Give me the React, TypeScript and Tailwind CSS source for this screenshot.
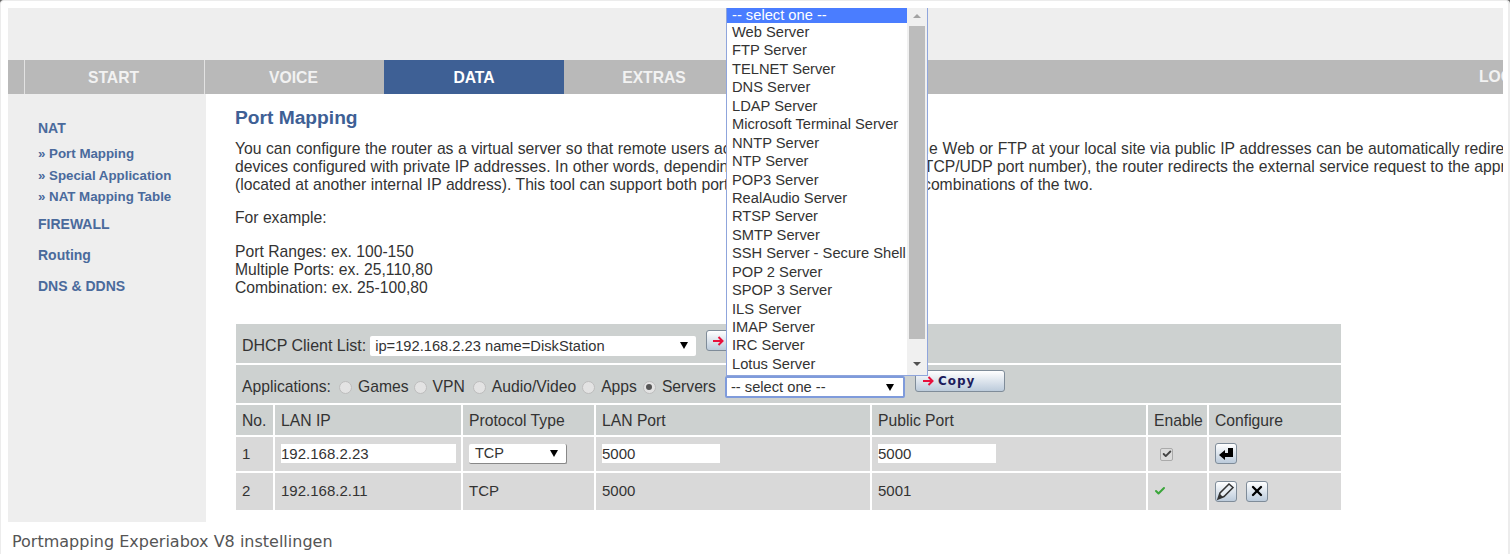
import { Check, X } from 'lucide-react';

const SERVERS = [
  'Web Server', 'FTP Server', 'TELNET Server', 'DNS Server', 'LDAP Server', 'Microsoft Terminal Server',
  'NNTP Server', 'NTP Server', 'POP3 Server', 'RealAudio Server', 'RTSP Server', 'SMTP Server',
  'SSH Server - Secure Shell', 'POP 2 Server', 'SPOP 3 Server', 'ILS Server', 'IMAP Server', 'IRC Server', 'Lotus Server',
];

const COLS = 'grid grid-cols-[37px_186px_131px_274px_274px_59px_132px] gap-x-[2px]';
const CELL = 'flex items-center bg-[#d9d9d9] pb-[1px] pl-[6px] text-[15px]';

function Arrow() {
  return (
    <svg width="11" height="10" viewBox="0 0 11 10" className="shrink-0">
      <path d="M0 5h9M5.500 1 9.500 5 5.500 9" fill="none" stroke="#e8103c" strokeWidth="2" />
    </svg>
  );
}

function Caret() {
  return <span className="h-0 w-0 border-x-[4px] border-t-[7px] border-x-transparent border-t-black" />;
}

function Radio({ on = false }: { on?: boolean }) {
  return (
    <span className="mr-[6px] flex h-[13px] w-[13px] shrink-0 items-center justify-center rounded-full border border-[#bdbdbd] bg-[#e3e3e3]">
      {on && <span className="h-[6px] w-[6px] rounded-full bg-[#555]" />}
    </span>
  );
}

function IconButton({ children }: { children: React.ReactNode }) {
  return (
    <span className="flex h-[21px] w-[22px] items-center justify-center rounded-[3px] border border-[#7f8c99] bg-gradient-to-b from-white to-[#bccbdb]">
      {children}
    </span>
  );
}

export default function App() {
  return (
    <div className="h-[554px] w-[1510px] overflow-hidden bg-[#666] font-['Liberation_Sans',Arial,sans-serif] text-[#333]">
      <div className="h-full overflow-hidden rounded-t-[4px] border-l border-r-2 border-t border-[#ececec] bg-white">
        <div className="relative ml-[7px] mt-[7px] h-[514px] w-[1495px] overflow-hidden">
          <div className="h-[52px] bg-[#eeeeee]" />
          <nav className="flex h-[34px] bg-[#b9b9b9] text-[15.700px] font-bold text-[#f2f2f2]">
            <div className="w-[16px]" />
            <div className="flex w-[180px] items-center justify-center border-l border-[#e2e2e2] pr-[2px] pt-[1px]">START</div>
            <div className="flex w-[180px] items-center justify-center border-l border-[#e2e2e2] pr-[2px] pt-[1px]">VOICE</div>
            <div className="flex w-[180px] items-center justify-center bg-[#3e6095] pt-[1px] text-white">DATA</div>
            <div className="flex w-[180px] items-center justify-center pt-[1px]">EXTRAS</div>
            <div className="ml-auto mr-[-43px] pt-[8px] leading-[18px]">LOGOUT</div>
          </nav>
          <div className="flex">
            <aside className="h-[428px] w-[198px] shrink-0 bg-[#eeeeee] pl-[30px] pt-[25px] text-[14px] font-bold leading-[18px] text-[#4a6a9c]">
              <div>NAT</div>
              <ul className="mt-[6px] text-[13.300px] leading-[21.600px]">
                <li>» Port Mapping</li>
                <li>» Special Application</li>
                <li>» NAT Mapping Table</li>
              </ul>
              <div className="mt-[7px]">FIREWALL</div>
              <div className="mt-[13px]">Routing</div>
              <div className="mt-[13px]">DNS &amp; DDNS</div>
            </aside>
            <main className="w-[1400px] shrink-0 pl-[29px] pt-[12px] text-[15.700px] leading-[18px]">
              <h1 className="mb-[10px] text-[19.200px] font-bold leading-[24px] text-[#3e6095]">Port Mapping</h1>
              <p className="whitespace-nowrap [word-spacing:0.2px]">
                You can configure the router as a virtual server so that remote users ac<span className="tracking-[0.25px]">cessing services such as the</span> Web or FTP at your local site via public IP addresses can be automatically redirected to local servers
                <br />
                devices configured with private IP addresses. In other words, depending on the requested service (TCP/UDP port number), the router redirects the external service request to the appropriate server
                <br />
                (located at another internal IP address). This tool can support both port ranges, multiple ports, and combinations of the two.
              </p>
              <p className="mt-[15px]">For example:</p>
              <p className="mt-[16px]">
                Port Ranges: ex. 100-150
                <br />
                Multiple Ports: ex. 25,110,80
                <br />
                Combination: ex. 25-100,80
              </p>
              <section className="ml-[1px] mt-[27px] flex w-[1105px] flex-col gap-y-[2px]">
                <div className="flex h-[39px] items-center bg-[#cdd1d0] pl-[6px] pt-[4px] text-[16px]">
                  DHCP Client List:
                  <span className="ml-[4px] flex h-[20px] w-[326px] items-center justify-between rounded-[2px] bg-white pl-[5px] pr-[8px] text-[14.700px]">
                    ip=192.168.2.23 name=DiskStation
                    <Caret />
                  </span>
                  <span className="ml-[10px] mt-[2px] flex h-[21px] w-[90px] items-center self-start rounded-[3px] border border-[#7f8c99] bg-gradient-to-b from-white to-[#bccbdb] pl-[6px]">
                    <Arrow />
                  </span>
                </div>
                <div className="flex h-[38px] items-center bg-[#cdd1d0] pl-[6px] pt-[6px]">
                  <span className="mr-[8px]">Applications:</span>
                  <Radio /><span className="mr-[5px]">Games</span>
                  <Radio /><span className="mr-[8px]">VPN</span>
                  <Radio /><span className="mr-[6px]">Audio/Video</span>
                  <Radio /><span className="mr-[6px]">Apps</span>
                  <Radio on /><span>Servers</span>
                  <span className="ml-[9px] mt-[5px] flex h-[22px] w-[180px] items-center justify-between self-start rounded-[2px] border-2 border-[#7f9bdb] bg-white pl-[4px] pr-[9px] text-[14.700px]">
                    -- select one --
                    <Caret />
                  </span>
                  <span className="ml-[10px] mt-[-1px] flex h-[22px] w-[90px] items-center self-start rounded-[3px] border border-[#7f8c99] bg-gradient-to-b from-white to-[#bccbdb] pl-[7px] font-['DejaVu_Sans',sans-serif] text-[12px] font-bold tracking-[1px] text-[#1c1c5c]">
                    <Arrow />
                    <span className="ml-[4px]">Copy</span>
                  </span>
                </div>
                <div className={`${COLS} h-[30px] items-center`}>
                  {['No.', 'LAN IP', 'Protocol Type', 'LAN Port', 'Public Port', 'Enable', 'Configure'].map((h) => (
                    <div key={h} className="flex h-full items-center bg-[#cdd1d0] pl-[6px] pt-[1px]">{h}</div>
                  ))}
                </div>
                <div className={`${COLS} h-[34px]`}>
                  <div className={CELL}>1</div>
                  <div className={CELL}><span className="flex h-[19px] w-[175px] items-center bg-white">192.168.2.23</span></div>
                  <div className={CELL}>
                    <span className="flex h-[20px] w-[98px] items-center justify-between rounded-[2px] border-b border-r border-[#888] bg-white pl-[6px] pr-[8px] text-[14.500px]">TCP<Caret /></span>
                  </div>
                  <div className={CELL}><span className="flex h-[19px] w-[118px] items-center bg-white">5000</span></div>
                  <div className={CELL}><span className="flex h-[19px] w-[118px] items-center bg-white">5000</span></div>
                  <div className="flex items-center bg-[#d9d9d9] pl-[12px]">
                    <span className="flex h-[13px] w-[13px] items-center justify-center rounded-[2px] border border-[#aaa] bg-[#dcdcdc]"><Check size={10} strokeWidth={4.500} color="#444" /></span>
                  </div>
                  <div className={CELL}>
                    <IconButton>
                      <svg width="16" height="14" viewBox="0 0 16 14"><path d="M10 1h5v9H7v3L1 8l6-5v3h3z" fill="#000" /></svg>
                    </IconButton>
                  </div>
                </div>
                <div className={`${COLS} h-[37px]`}>
                  <div className={CELL}>2</div>
                  <div className={CELL}>192.168.2.11</div>
                  <div className={CELL}>TCP</div>
                  <div className={CELL}>5000</div>
                  <div className={CELL}>5001</div>
                  <div className={CELL}><Check size={12} strokeWidth={4} color="#3aa63a" /></div>
                  <div className={`${CELL} gap-[9px]`}>
                    <IconButton>
                      <svg width="20" height="19" viewBox="0 0 20 19"><path d="M2 17l2-6 9-9 4 3.500-9 9z" fill="#e8eef4" stroke="#333" strokeWidth="1.500" /><path d="M2 17l2-5 3 3z" fill="#333" /></svg>
                    </IconButton>
                    <IconButton><X size={16} strokeWidth={3.500} color="#000" /></IconButton>
                  </div>
                </div>
              </section>
            </main>
          </div>
          <div className="absolute left-[718px] top-0 flex h-[368px] w-[202px] border-x border-b border-[#8fa5dc] bg-white text-[14.700px]">
            <ul className="w-[180px] shrink-0">
              <li className="h-[15px] bg-[#4a7dff] pl-[5px] leading-[14px] text-white">-- select one --</li>
              {SERVERS.map((s) => (
                <li key={s} className="h-[18.450px] pl-[5px] leading-[18.450px]">{s}</li>
              ))}
            </ul>
            <div className="flex flex-1 flex-col items-center bg-[#f0f0f0]">
              <span className="mt-[6px] h-0 w-0 border-x-[4px] border-b-[4px] border-x-transparent border-b-[#a3a3a3]" />
              <span className="mt-[8px] h-[313px] w-[16px] bg-[#bcbcbc]" />
              <span className="mt-[23px] h-0 w-0 border-x-[4px] border-t-[4px] border-x-transparent border-t-[#505050]" />
            </div>
          </div>
        </div>
        <p className="ml-[11px] mt-[11px] font-['DejaVu_Sans',sans-serif] text-[16px] leading-[18px] text-[#555]">Portmapping Experiabox V8 instellingen</p>
      </div>
    </div>
  );
}
